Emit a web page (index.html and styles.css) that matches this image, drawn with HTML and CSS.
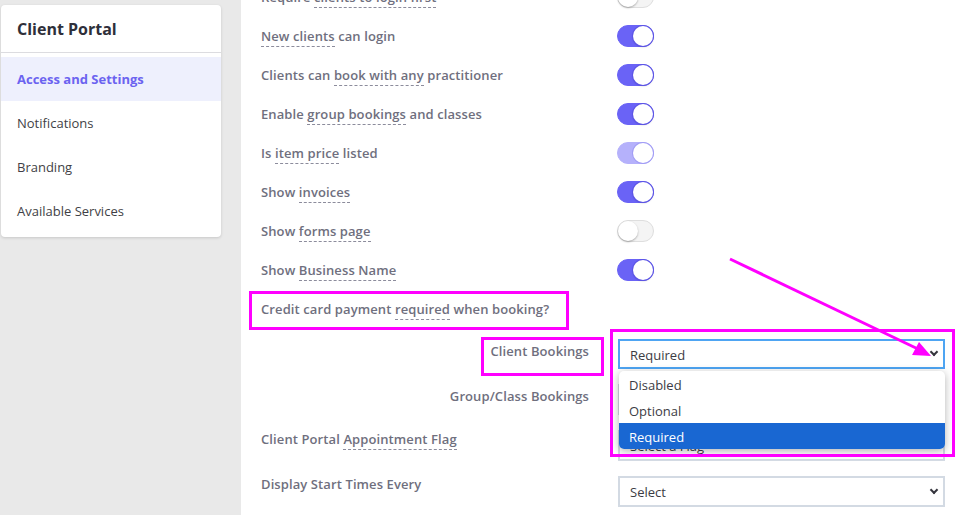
FILE: index.html
```html
<!DOCTYPE html>
<html lang="en">
<head>
  <meta charset="UTF-8" />
  <meta name="viewport" content="width=device-width, initial-scale=1.0"/>
  <title>Client Portal</title>
  <link rel="stylesheet" href="styles.css">
</head>
<body>
  <aside class="side">
    <div class="side-card">
      <div class="side-title">Client Portal</div>
      <ul class="side-menu">
        <li class="active">Access and Settings</li>
        <li>Notifications</li>
        <li>Branding</li>
        <li>Available Services</li>
      </ul>
    </div>
  </aside>

  <main class="main">
    <div class="settings">
      <div class="row"><span class="label">Require <u>clients to login first</u></span><span class="toggle"></span></div>
      <div class="row"><span class="label"><u>New clients</u> can login</span><span class="toggle on"></span></div>
      <div class="row"><span class="label">Clients can <u>book with any</u> practitioner</span><span class="toggle on"></span></div>
      <div class="row"><span class="label">Enable <u>group bookings</u> and classes</span><span class="toggle on"></span></div>
      <div class="row"><span class="label">Is <u>item price</u> listed</span><span class="toggle on faded"></span></div>
      <div class="row"><span class="label">Show <u>invoices</u></span><span class="toggle on"></span></div>
      <div class="row"><span class="label">Show <u>forms page</u></span><span class="toggle"></span></div>
      <div class="row"><span class="label">Show <u>Business Name</u></span><span class="toggle on"></span></div>
      <div class="row"><span class="label">Credit card payment <u>required</u> when booking?</span></div>

      <div class="field first">
        <span class="label right">Client Bookings</span>
        <div class="select-wrap">
          <div class="select focus">Required<span class="chev"></span></div>
          <ul class="dropdown">
            <li>Disabled</li>
            <li>Optional</li>
            <li class="picked">Required</li>
          </ul>
        </div>
      </div>
      <div class="field">
        <span class="label right">Group/Class Bookings</span>
        <div class="select">Required<span class="chev"></span></div>
      </div>
      <div class="field flag">
        <span class="label">Client Portal <u>Appointment Flag</u></span>
        <div class="select">Select a Flag<span class="chev"></span></div>
      </div>
      <div class="field last">
        <span class="label">Display Start Times Every</span>
        <div class="select">Select<span class="chev"></span></div>
      </div>
    </div>
  </main>

  <!-- annotations drawn on the screenshot -->
  <div class="mark mark-credit"></div>
  <div class="mark mark-client"></div>
  <div class="mark mark-select"></div>
  <svg class="arrow" width="955" height="515" viewBox="0 0 955 515">
    <line x1="730" y1="259" x2="918" y2="349" stroke="#ff00ff" stroke-width="3"/>
    <polygon points="931,356 912,355 919,342" fill="#ff00ff"/>
  </svg>
</body>
</html>
```

FILE: styles.css
```css
* {
  box-sizing: border-box;
}

body {
  display: flex;
  height: 100vh;
  margin: 0;
  background-color: #e9e9e9;
  font-family: "Open Sans", "Liberation Sans", sans-serif;
  overflow: hidden;
  position: relative;
}

.side {
  width: 241px;
  flex-shrink: 0;
  padding: 5px 20px 0 1px;
}

.side-card {
  background: #fff;
  border-radius: 4px;
  box-shadow: 0 1px 3px rgba(0, 0, 0, 0.15);
  padding-bottom: 4px;
}

.side-title {
  height: 48px;
  padding-left: 16px;
  display: flex;
  align-items: center;
  font-size: 16px;
  font-weight: 700;
  color: #2e2f3a;
  border-bottom: 1px solid #dcdce0;
}

.side-menu {
  list-style: none;
  margin: 4px 0 0;
  padding: 0;
}

.side-menu li {
  height: 44px;
  padding-left: 16px;
  display: flex;
  align-items: center;
  font-size: 13px;
  color: #3f3f46;
}

.side-menu li.active {
  background: #eef0fd;
  color: #6b63f0;
  font-weight: 700;
}

.main {
  flex: 1;
  background: #fff;
  padding: 0 10px 0 20px;
}

.settings {
  margin-top: -23px;
}

.row {
  height: 39px;
  display: grid;
  grid-template-columns: 356px 1fr;
  align-items: center;
}

.label {
  font-size: 13px;
  font-weight: 600;
  color: #6f6f7e;
  line-height: 18px;
  letter-spacing: 0.1px;
}

.label u {
  text-decoration: none;
  border-bottom: 1px dashed #8c8c9c;
  padding-bottom: 1px;
}

.label.right {
  text-align: right;
  padding-right: 29px;
}

.toggle {
  width: 37px;
  height: 22px;
  border-radius: 11px;
  background: #f4f4f4;
  border: 1px solid #dedede;
  position: relative;
}

.toggle::after {
  content: "";
  position: absolute;
  top: 0;
  left: 0;
  width: 20px;
  height: 20px;
  border-radius: 50%;
  background: #fff;
  box-shadow: 0 1px 2px rgba(0, 0, 0, 0.3);
}

.toggle.on {
  background: #6a63f6;
  border-color: #6a63f6;
}

.toggle.on::after {
  left: 15px;
  box-shadow: 0 0 0 1px #5d55e6, 0 1px 2px rgba(0, 0, 0, 0.25);
}

.toggle.faded {
  background: #b5b1fb;
  border-color: #b5b1fb;
}

.toggle.faded::after {
  box-shadow: 0 0 0 1px #a29df5;
}

.field {
  display: grid;
  grid-template-columns: 357px 1fr;
  align-items: start;
  margin-top: 15px;
}

.field.first {
  margin-top: 11px;
}

.field .label {
  padding-top: 3px;
}

.field.flag .label {
  padding-top: 0;
}

.field.last {
  margin-top: 15px;
}

.field.last .label {
  padding-top: 0;
  margin-top: -1px;
}

.select-wrap {
  position: relative;
}

.select {
  height: 31px;
  border: 2px solid #d3dae3;
  background: #fff;
  font-size: 13px;
  color: #3c3c44;
  padding: 1px 0 0 10px;
  display: flex;
  align-items: center;
  position: relative;
}

.select.focus {
  height: 30px;
  border-color: #4ea5f3;
}

.chev {
  position: absolute;
  right: 6px;
  top: 50%;
  width: 6px;
  height: 6px;
  margin-top: -5px;
  border-right: 2px solid #35353d;
  border-bottom: 2px solid #35353d;
  transform: rotate(45deg);
}

.dropdown {
  position: absolute;
  top: 32px;
  left: 1px;
  right: 0;
  margin: 0;
  padding: 0;
  list-style: none;
  background: #fff;
  border-radius: 5px;
  box-shadow: 0 2px 8px rgba(0, 0, 0, 0.3);
  overflow: hidden;
  z-index: 5;
}

.dropdown li {
  height: 26px;
  padding: 1px 0 0 10px;
  display: flex;
  align-items: center;
  font-size: 13px;
  color: #3c3c44;
}

.dropdown li.picked {
  background: #1967d2;
  color: #fff;
}

.mark {
  position: absolute;
  border: 3px solid #ff00ff;
  z-index: 10;
}

.mark-credit {
  left: 249px;
  top: 291px;
  width: 320px;
  height: 39px;
}

.mark-client {
  left: 481px;
  top: 337px;
  width: 123px;
  height: 39px;
}

.mark-select {
  left: 610px;
  top: 329px;
  width: 345px;
  height: 128px;
}

.arrow {
  position: absolute;
  left: 0;
  top: 0;
  z-index: 11;
  pointer-events: none;
}
```
